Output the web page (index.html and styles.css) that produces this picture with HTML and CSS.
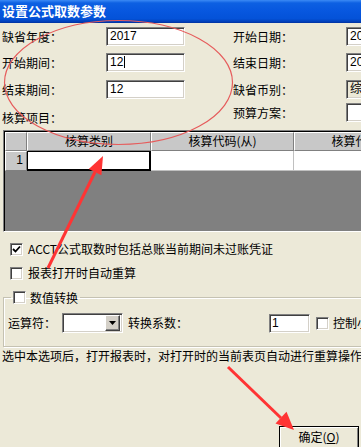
FILE: index.html
```html
<!DOCTYPE html>
<html lang="zh-CN">
<head>
<meta charset="utf-8">
<title>设置公式取数参数</title>
<link rel="stylesheet" href="styles.css">
</head>
<body>
<div class="window">
  <div class="titlebar">设置公式取数参数</div>

  <div class="form">
    <span class="lbl">缺省年度：</span><span class="edit">2017</span><span></span>
    <span class="lbl">开始日期：</span><span class="edit">2017-12-01</span>

    <span class="lbl">开始期间：</span><span class="edit">12<i class="caret"></i></span><span></span>
    <span class="lbl">结束日期：</span><span class="edit">2017-12-31</span>

    <span class="lbl">结束期间：</span><span class="edit">12</span><span></span>
    <span class="lbl">缺省币别：</span><span class="edit disabled">综合本位币</span>

    <span class="lbl last">核算项目：</span><span></span><span></span>
    <span class="lbl">预算方案：</span><span class="edit"></span>
  </div>

  <div class="grid">
    <div class="grow head">
      <div class="corner"></div>
      <div class="hc">核算类别</div>
      <div class="hc">核算代码(从)</div>
      <div class="hc">核算代码(到)</div>
    </div>
    <div class="grow data">
      <div class="rh">1</div>
      <div class="cell sel"></div>
      <div class="cell"></div>
      <div class="cell"></div>
    </div>
    <div class="gempty"></div>
  </div>

  <div class="checks">
    <div class="cb-row">
      <span class="cb"><svg width="9" height="9" viewBox="0 0 9 9"><path d="M1 4 L3.5 6.5 L8 1.5" fill="none" stroke="#000" stroke-width="1.8"/></svg></span>
      <span>ACCT公式取数时包括总账当前期间未过账凭证</span>
    </div>
    <div class="cb-row">
      <span class="cb"></span>
      <span>报表打开时自动重算</span>
    </div>
  </div>

  <fieldset class="group">
    <legend class="legend"><span class="cb"></span><span>数值转换</span></legend>
    <div class="frow">
      <span>运算符：</span>
      <span class="combo"><span class="combo-btn"><svg width="7" height="4" viewBox="0 0 7 4"><path d="M0 0 H7 L3.5 4 Z" fill="#000"/></svg></span></span>
      <span class="lbl-k">转换系数：</span>
      <span class="edit small">1</span>
      <span class="cb"></span>
      <span class="ctrl">控制小数位数</span>
    </div>
  </fieldset>

  <div class="desc">选中本选项后，打开报表时，对打开时的当前表页自动进行重算操作</div>

  <div class="footer">
    <button class="btn">确定(<u>O</u>)</button>
  </div>

  <svg class="marks" width="361" height="447" viewBox="0 0 361 447">
    <ellipse cx="118.5" cy="82.5" rx="114" ry="62" fill="none" stroke="#E65C5C" stroke-width="1.2"/>
    <line x1="48" y1="268" x2="95" y2="172" stroke="#FF3434" stroke-width="3"/>
    <polygon points="103,156 101.4,175.2 88.8,169" fill="#FF3434"/>
    <line x1="228" y1="367" x2="281" y2="418" stroke="#FF3434" stroke-width="3"/>
    <polygon points="294,430 275.5,423.4 286.5,411.8" fill="#FF3434"/>
  </svg>
</div>
</body>
</html>
```

FILE: styles.css
```css
* { box-sizing: border-box; }

html, body {
  margin: 0;
  padding: 0;
}

body {
  width: 361px;
  height: 447px;
  overflow: hidden;
  background: #ECE9D8;
  font: 12px/14px "Liberation Sans", "Noto Sans CJK SC", sans-serif;
  color: #000;
}

.window {
  position: relative;
  width: 361px;
  height: 447px;
  overflow: hidden;
}

.titlebar {
  height: 23px;
  padding-left: 2px;
  color: #fff;
  font-weight: bold;
  font-size: 13px;
  line-height: 21px;
  font-family: "Noto Sans CJK SC", sans-serif;
  background: linear-gradient(to bottom, #3B8AF5 0, #0D60E2 3px, #0757DF 50%, #0452D8 85%, #003DB5 100%);
  border-bottom: 1px solid #0036A8;
}

.form {
  display: grid;
  grid-template-columns: 104px 79px 48px 113px 60px;
  grid-template-rows: 26px 27px 23px 24px;
  padding: 4px 0 0 2px;
  align-items: start;
  width: 420px;
}

.lbl {
  line-height: 19px;
  white-space: nowrap;
  font-family: "Noto Sans CJK SC", sans-serif;
}

.lbl.last {
  padding-top: 5px;
}

.edit {
  display: block;
  height: 19px;
  background: #fff;
  border: 1px solid;
  border-color: #808080 #fff #fff #808080;
  box-shadow: inset 1px 1px 0 #404040, inset -1px -1px 0 #D4D0C8;
  padding-left: 3px;
  line-height: 17px;
  white-space: nowrap;
  overflow: hidden;
  font-family: "Liberation Sans", "Noto Sans CJK SC", sans-serif;
}

.edit.disabled {
  background: #ECE9D8;
}

.caret {
  display: inline-block;
  width: 1px;
  height: 12px;
  background: #000;
  vertical-align: -2px;
  margin-left: 1px;
}

/* ---------- grid ---------- */
.grid {
  margin: 3px 0 0 3px;
  width: 420px;
  height: 102px;
  border: 1px solid;
  border-color: #808080 #fff #fff #808080;
  box-shadow: inset 1px 1px 0 #000;
  padding: 1px 0 0 1px;
  display: flex;
  flex-direction: column;
}

.grow {
  display: grid;
  grid-template-columns: 22px 124px 143px 143px;
}

.grow.head {
  height: 19px;
}

.grow.data {
  height: 20px;
}

.corner,
.hc,
.rh {
  background: #C8C8C8;
  border-top: 1px solid #fff;
  border-left: 1px solid #fff;
  border-right: 1px solid #808080;
  border-bottom: 1px solid #808080;
  font-family: "Noto Sans CJK SC", sans-serif;
}

.hc {
  text-align: center;
  line-height: 16px;
  white-space: nowrap;
  overflow: hidden;
}

.rh {
  text-align: right;
  padding-right: 3px;
  line-height: 17px;
  font-family: "Liberation Sans", sans-serif;
}

.cell {
  background: #fff;
  border-right: 1px solid #C0C0C0;
  border-bottom: 1px solid #C0C0C0;
}

.cell.sel {
  border: 2px solid #000;
  border-top-width: 1px;
  border-left-width: 1px;
}

.gempty {
  flex: 1;
  background: #808080;
}

/* ---------- checks ---------- */
.checks {
  margin-top: 5px;
  padding-left: 10px;
}

.cb-row {
  display: flex;
  align-items: center;
  gap: 5px;
  height: 24px;
  font-family: "Noto Sans CJK SC", sans-serif;
  white-space: nowrap;
}

.cb {
  flex: none;
  display: inline-flex;
  align-items: center;
  justify-content: center;
  width: 13px;
  height: 13px;
  background: #fff;
  border: 1px solid;
  border-color: #808080 #fff #fff #808080;
  box-shadow: inset 1px 1px 0 #404040, inset -1px -1px 0 #D4D0C8;
}

/* ---------- group ---------- */
.group {
  margin: 6px -20px 0 3px;
  padding: 0 0 13px 0;
  border: 1px solid #C5C2B2;
  box-shadow: 1px 1px 0 #fff, inset 1px 1px 0 #fff;
}

.legend {
  margin-left: 7px;
  padding: 0 2px;
  height: 13px;
  display: flex;
  align-items: center;
  gap: 4px;
  line-height: 13px;
  font-family: "Noto Sans CJK SC", sans-serif;
}

.frow {
  display: flex;
  align-items: center;
  height: 20px;
  margin-top: 9px;
  padding-left: 4px;
  white-space: nowrap;
  font-family: "Noto Sans CJK SC", sans-serif;
}

.combo {
  display: flex;
  justify-content: flex-end;
  align-items: center;
  margin-left: 6px;
  width: 61px;
  height: 20px;
  background: #fff;
  border: 1px solid;
  border-color: #808080 #fff #fff #808080;
  box-shadow: inset 1px 1px 0 #404040, inset -1px -1px 0 #D4D0C8;
  padding: 2px;
}

.combo-btn {
  display: flex;
  align-items: center;
  justify-content: center;
  width: 15px;
  height: 16px;
  background: #D4D0C8;
  border: 1px solid;
  border-color: #fff #404040 #404040 #fff;
  box-shadow: inset -1px -1px 0 #808080;
}

.lbl-k {
  margin-left: 5px;
}

.edit.small {
  margin-left: 81px;
  width: 41px;
  height: 19px;
  padding-left: 2px;
}

.frow .cb {
  margin-left: 6px;
}

.ctrl {
  margin-left: 4px;
}

/* ---------- description / footer ---------- */
.desc {
  margin-top: 2px;
  padding-left: 2px;
  line-height: 14px;
  white-space: nowrap;
  font-family: "Noto Sans CJK SC", sans-serif;
}

.footer {
  display: flex;
  justify-content: flex-end;
  margin-top: 63px;
  padding-right: 2px;
}

.btn {
  width: 80px;
  height: 24px;
  margin: 0;
  padding: 0 0 3px;
  background: #ECE9D8;
  border: 1px solid #000;
  box-shadow: inset 1px 1px 0 #fff, inset -1px -1px 0 #808080;
  font: 12px/16px "Noto Sans CJK SC", sans-serif;
  color: #000;
}

.marks {
  position: absolute;
  left: 0;
  top: 0;
  pointer-events: none;
}
```
